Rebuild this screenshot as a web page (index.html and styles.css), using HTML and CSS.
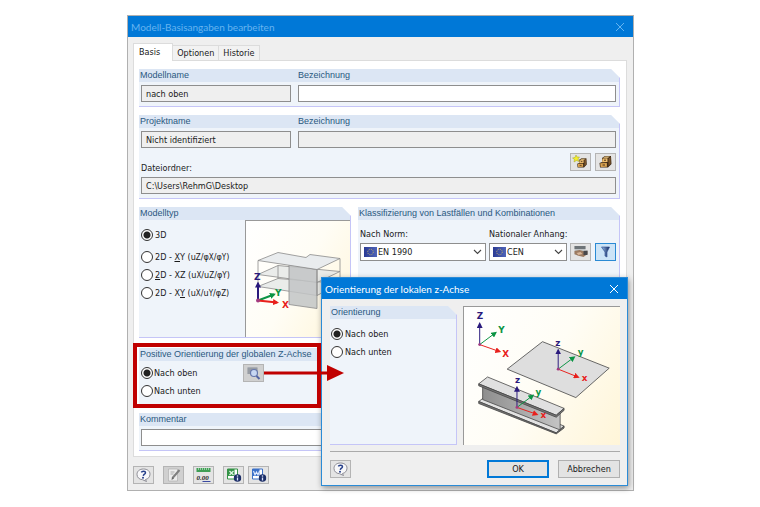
FILE: index.html
```html
<!DOCTYPE html>
<html lang="de">
<head>
<meta charset="utf-8">
<title>Modell-Basisangaben bearbeiten</title>
<link rel="stylesheet" href="styles.css">
</head>
<body>
<svg class="defs" aria-hidden="true">
  <defs>
    <marker id="head-z" viewBox="0 0 6 6" refX="4" refY="3" markerWidth="6" markerHeight="6" markerUnits="userSpaceOnUse" orient="auto"><path d="M0 0L6 3L0 6Z" fill="#2a1a7c"/></marker>
    <marker id="head-y" viewBox="0 0 6 6" refX="4" refY="3" markerWidth="6" markerHeight="6" markerUnits="userSpaceOnUse" orient="auto"><path d="M0 0L6 3L0 6Z" fill="#0b9444"/></marker>
    <marker id="head-x" viewBox="0 0 6 6" refX="4" refY="3" markerWidth="6" markerHeight="6" markerUnits="userSpaceOnUse" orient="auto"><path d="M0 0L6 3L0 6Z" fill="#e8201c"/></marker>
    <linearGradient id="flag-blue"><stop offset="0" stop-color="#2a3a94"/><stop offset="1" stop-color="#5065b8"/></linearGradient>
    <linearGradient id="web" x1="0" x2="1"><stop offset="0" stop-color="#8e8e8e"/><stop offset="1" stop-color="#c4c4c4"/></linearGradient>
    <linearGradient id="funnel"><stop offset="0" stop-color="#9cc4ee"/><stop offset="1" stop-color="#10245c"/></linearGradient>
    <symbol id="flag" viewBox="0 0 13 10"><rect width="13" height="10" fill="url(#flag-blue)"/><circle cx="6.500" cy="5" r="2.800" fill="none" stroke="#c5b66a" stroke-width="1" stroke-dasharray="1 1.200"/></symbol>
    <symbol id="chevron" viewBox="0 0 9 6"><path d="M1 1L4.500 4.500L8 1" fill="none" stroke="#444" stroke-width="1.100"/></symbol>
    <symbol id="help" viewBox="0 0 16 14"><path d="M8 1C12 1 14.500 3.200 14.500 6.200C14.500 9 12.500 11 10 11.500L11 13.500L7 11.700C3.500 11.500 1.500 9.200 1.500 6.400C1.500 3.200 4 1 8 1Z" fill="#f8f8fa" stroke="#8c8c94"/><path d="M5.800 4.400C6.500 2.800 10 2.700 10 4.700C10 6.200 8 6.200 7.800 7.800" fill="none" stroke="#27408b" stroke-width="1.500"/><circle cx="7.500" cy="9.800" r="1" fill="#27408b"/></symbol>
    <symbol id="cabinet" viewBox="0 0 15 14"><path d="M4 3L7 1L13 1L13.500 9L10 12.500H2L1.500 8L4 7Z" fill="#3e2a16"/><path d="M4.500 3.500L9.500 3.200L9.500 7L4 7.200Z" fill="#edbd6d"/><path d="M2.200 8.200L8.800 8L9 11.800L2.700 12Z" fill="#dca552"/><path d="M5 2.800L7.300 1.600H12L10 2.800Z" fill="#f2cf8c"/><path d="M10.500 3.500L12.600 2V8.500L10.500 11Z" fill="#7b552b"/><path d="M6 5.200H8M4.500 10H7" stroke="#4a3119"/></symbol>
    <symbol id="info" viewBox="0 0 8 8"><circle cx="4" cy="4" r="3.800" fill="#1d2f68"/><path d="M4 3.500V6.500" stroke="#dbe4ff" stroke-width="1.300"/><circle cx="4" cy="2" r=".8" fill="#dbe4ff"/></symbol>
  </defs>
</svg>

<main class="desktop">
  <form class="window main-window">
    <header class="titlebar inactive">
      <h1>Modell-Basisangaben bearbeiten</h1>
      <button type="button" class="close" aria-label="Schließen"><svg viewBox="0 0 10 10"><path d="M1 1L9 9M9 1L1 9"/></svg></button>
    </header>
    <nav class="tabs">
      <button type="button" class="tab active">Basis</button>
      <button type="button" class="tab">Optionen</button>
      <button type="button" class="tab">Historie</button>
    </nav>
    <div class="page">
      <section class="group">
        <div class="heading pair"><label for="model">Modellname</label><label for="model-desc">Bezeichnung</label></div>
        <div class="fields pair">
          <input id="model" class="box" value="nach oben" readonly>
          <input id="model-desc" class="box">
        </div>
      </section>

      <section class="group">
        <div class="heading pair"><label for="project">Projektname</label><label for="project-desc">Bezeichnung</label></div>
        <div class="fields pair">
          <input id="project" class="box" value="Nicht identifiziert" readonly>
          <input id="project-desc" class="box" readonly>
        </div>
        <div class="folder-row">
          <label for="folder">Dateiordner:</label>
          <button type="button" class="tool" aria-label="Neues Projekt"><svg viewBox="0 0 17 14"><svg x="4" y="2" width="12" height="12"><use href="#cabinet"/></svg><path d="M4 0L5 2L7.500 2L6 4L7 6.500L4.500 5.500L2 7L2.500 4.500L.5 3L3 2.500Z" fill="#f4ee2c" stroke="#a0a32a" stroke-width=".5"/></svg></button>
          <button type="button" class="tool" aria-label="Projekt wählen"><svg viewBox="0 0 15 14"><use href="#cabinet"/></svg></button>
        </div>
        <div class="fields last">
          <input id="folder" class="box" value="C:\Users\RehmG\Desktop" readonly>
        </div>
      </section>

      <div class="columns">
        <section class="group">
          <h2 class="heading">Modelltyp</h2>
          <div class="model-body">
            <div class="model-types">
              <label class="radio first"><input type="radio" name="type" checked>3D</label>
              <label class="radio"><input type="radio" name="type"><span>2D - <u>X</u>Y (u<small>Z</small>/φ<small>X</small>/φ<small>Y</small>)</span></label>
              <label class="radio"><input type="radio" name="type"><span><u>2</u>D - XZ (u<small>X</small>/u<small>Z</small>/φ<small>Y</small>)</span></label>
              <label class="radio"><input type="radio" name="type"><span>2D - X<u>Y</u> (u<small>X</small>/u<small>Y</small>/φ<small>Z</small>)</span></label>
            </div>
            <div class="picture">
              <svg viewBox="0 0 104 115" role="img" aria-label="Gebäude im Koordinatensystem">
                <g stroke="#8a8a8a" stroke-width=".8" fill="#e3e5e5" fill-opacity=".75">
                  <path d="M12 65L32 57L94 62L71 74Z"/>
                  <path d="M12 53L32 44L94 50L71 61Z"/>
                  <path d="M43 43L71 48V87L43 83Z" fill="#c2c4c6" fill-opacity=".85"/>
                  <path d="M12 39L32 31L60 36L64 33L94 37L71 48Z" fill="#e9ecee" fill-opacity="1"/>
                  <path d="M12 39V79M32 44V57M94 37V62M71 48V74" fill="none"/>
                </g>
                <g class="axes bold">
                  <path class="z" d="M12 79V62"/><path class="y" d="M12 79L28 73"/><path class="x" d="M12 79L31 81"/>
                  <circle cx="12" cy="79" r="2"/>
                  <text class="zt" x="8" y="58">Z</text><text class="yt" x="29" y="74">Y</text><text class="xt" x="36" y="86">X</text>
                </g>
              </svg>
            </div>
          </div>
        </section>

        <section class="group norm">
          <h2 class="heading">Klassifizierung von Lastfällen und Kombinationen</h2>
          <div class="norm-body">
            <div class="norm-field wide">
              <label for="norm">Nach Norm:</label>
              <div class="combo"><svg class="flag"><use href="#flag"/></svg><select id="norm"><option>EN 1990</option></select><svg class="chevron"><use href="#chevron"/></svg></div>
            </div>
            <div class="norm-field">
              <label for="annex">Nationaler Anhang:</label>
              <div class="combo"><svg class="flag"><use href="#flag"/></svg><select id="annex"><option>CEN</option></select><svg class="chevron"><use href="#chevron"/></svg></div>
            </div>
            <button type="button" class="tool" aria-label="Norm bearbeiten"><svg viewBox="0 0 16 14"><path d="M2 1H13V10H2Z" fill="#bfc3c5"/><path d="M2 1H13V4H2Z" fill="#6e7478"/><path d="M2 6L7 5L12 6.500L15 6V9L11 12L5 10.500L2 9Z" fill="#9b7a60"/><path d="M11 6L15 5.500V10L11 10Z" fill="#46474b"/><path d="M4 8L8 7L10 9L6 10Z" fill="#d9b698"/></svg></button>
            <button type="button" class="tool filter" aria-label="Filter"><svg viewBox="0 0 16 14"><path d="M4 2H12L9.500 7V12L7.500 11V7Z" fill="url(#funnel)" stroke="#27458c" stroke-width=".6"/></svg></button>
          </div>
        </section>

        <section class="group orientation">
          <h2 class="heading">Positive Orientierung der globalen Z-Achse</h2>
          <div class="orientation-body">
            <div class="radios">
              <label class="radio"><input type="radio" name="global" checked>Nach oben</label>
              <label class="radio"><input type="radio" name="global">Nach unten</label>
            </div>
            <button type="button" class="tool dark" aria-label="Details"><svg viewBox="0 0 16 14"><path d="M2 1H12V8H2Z" fill="#a9adb4"/><path d="M2 3H12M2 5H12M2 7H9" stroke="#858a92"/><circle cx="8.500" cy="7" r="3.500" fill="#c7d7f3" stroke="#6778ac" stroke-width="1.200"/><path d="M11 10L14 13" stroke="#5264a4" stroke-width="2"/></svg></button>
          </div>
        </section>
      </div>

      <section class="group">
        <label class="heading" for="comment">Kommentar</label>
        <div class="fields"><input id="comment" class="box"></div>
      </section>
    </div>
    <footer class="toolbar">
      <button type="button" class="tool" aria-label="Hilfe"><svg viewBox="0 0 16 14"><use href="#help"/></svg></button>
      <button type="button" class="tool dark" aria-label="Kommentar"><svg viewBox="0 0 16 14"><path d="M3 1H12V13H3Z" fill="#ececec" stroke="#aaa" stroke-width=".6"/><path d="M5 4H9M5 6H8" stroke="#aaa"/><path d="M7 10L14 2" stroke="#808080" stroke-width="2"/><path d="M6 12L6.500 9L8.500 10.500Z" fill="#666"/></svg></button>
      <button type="button" class="tool" aria-label="Einheiten"><svg viewBox="0 0 16 14"><path d="M1 0H15V4H1Z" fill="#3f9e55"/><path d="M3 0V2M5 0V2M7 0V2M9 0V2M11 0V2M13 0V2" stroke="#bfe3c5" stroke-width=".7"/><text class="digits" x="1" y="12">0.00</text><path d="M7 13.500H15" stroke="#3a49a0"/></svg></button>
      <button type="button" class="tool" aria-label="Excel-Info"><svg viewBox="0 0 16 14"><path d="M2 1H12V11H2Z" fill="#fff" stroke="#349347"/><path d="M2 1H9V8H2Z" fill="#349347"/><path d="M4 3L8 7M8 3L4 7" stroke="#dff5e2" stroke-width="1.300"/><svg x="8" y="6" width="8" height="8"><use href="#info"/></svg></svg></button>
      <button type="button" class="tool" aria-label="Word-Info"><svg viewBox="0 0 16 14"><path d="M2 1H12V11H2Z" fill="#fff" stroke="#3b70c8"/><path d="M2 1H9V8H2Z" fill="#3b70c8"/><path d="M3 3L4.500 7L6 4L7.500 7L9 3" fill="none" stroke="#e3ecff" stroke-width="1.100"/><svg x="8" y="6" width="8" height="8"><use href="#info"/></svg></svg></button>
    </footer>
  </form>

  <form class="window dialog">
    <header class="titlebar">
      <h1>Orientierung der lokalen z-Achse</h1>
      <button type="button" class="close" aria-label="Schließen"><svg viewBox="0 0 10 10"><path d="M1 1L9 9M9 1L1 9"/></svg></button>
    </header>
    <div class="dialog-body">
      <section class="group">
        <h2 class="heading">Orientierung</h2>
        <div class="radios">
          <label class="radio"><input type="radio" name="local" checked>Nach oben</label>
          <label class="radio"><input type="radio" name="local">Nach unten</label>
        </div>
      </section>
      <div class="picture">
        <svg viewBox="0 0 159 138" role="img" aria-label="Lokale Achsen an Fläche und Stab">
          <path d="M80 34L148 61L114 91L44 62Z" fill="#dedede" stroke="#555" stroke-width=".9"/>
          <g stroke="#444" stroke-width=".8" stroke-linejoin="round">
            <path d="M15 95L23 89L102 120L94 127Z" fill="#e2e2e2"/>
            <path d="M15 95V97L94 128L102 122V120L94 127Z" fill="#777"/>
            <path d="M19 79V93L98 124V106Z" fill="url(#web)"/>
            <path d="M15 77L24 70L102 102L94 109Z" fill="#e0e0e0"/>
            <path d="M15 77V79L94 111L102 104V102L94 109Z" fill="#777"/>
          </g>
          <g class="axes">
            <path class="z" d="M16 37V16"/><path class="y" d="M16 37L32 25"/><path class="x" d="M16 37L36 44"/><circle cx="16" cy="37" r="1.500"/>
            <text class="zt" x="13" y="11">Z</text><text class="yt" x="35" y="25">Y</text><text class="xt" x="39" y="50">X</text>
            <path class="z" d="M96 62V43"/><path class="y" d="M96 62L112 50"/><path class="x" d="M96 62L116 70"/><circle cx="96" cy="62" r="1.500"/>
            <text class="zt" x="93" y="38">z</text><text class="yt" x="116" y="48">y</text><text class="xt" x="120" y="74">x</text>
            <path class="z" d="M54 101V81"/><path class="y" d="M54 101L70 89"/><path class="x" d="M54 101L74 108"/><circle cx="54" cy="101" r="1.500"/>
            <text class="zt" x="52" y="76">z</text><text class="yt" x="73" y="88">y</text><text class="xt" x="78" y="112">x</text>
          </g>
        </svg>
      </div>
    </div>
    <footer class="dialog-footer">
      <button type="button" class="tool" aria-label="Hilfe"><svg viewBox="0 0 16 14"><use href="#help"/></svg></button>
      <button type="submit" class="action primary">OK</button>
      <button type="button" class="action">Abbrechen</button>
    </footer>
  </form>

  <div class="callout"></div>
  <svg class="callout-arrow" viewBox="0 0 80 18" aria-hidden="true"><path d="M0 9H66" stroke="#c00000" stroke-width="3"/><path d="M63 1L80 9L63 17Z" fill="#c00000"/></svg>
</main>
</body>
</html>
```

FILE: styles.css
```css
* { box-sizing: border-box; }

body {
  margin: 0;
  background: #fff;
  color: #1a1a1a;
  font: 9px/12px "DejaVu Sans Condensed", "Noto Sans", sans-serif;
}

h1, h2 { margin: 0; font: inherit; }
button, input, select { font: inherit; color: inherit; margin: 0; }
.defs { position: absolute; width: 0; height: 0; }

.desktop { position: relative; padding: 15px 126px 16px 127px; }

.window { background: #efefef; border: 1px solid #b0b0b0; }

.titlebar {
  display: flex;
  align-items: center;
  justify-content: space-between;
  height: 21px;
  padding: 0 8px 0 3px;
  background: #0078d7;
  color: #fff;
  font: 10px/12px Lato, "Noto Sans", sans-serif;
}
.inactive { color: #66b4f0; }
.close { display: flex; padding: 0; border: 0; background: none; }
.close svg { width: 10px; height: 10px; fill: none; stroke: currentColor; }

.tabs { display: flex; align-items: flex-end; padding: 6px 5px 0; }
.tab {
  height: 15px;
  padding: 0 4px;
  border: 1px solid #dcdcdc;
  border-width: 1px 1px 0 0;
  background: #f2f2f2;
}
.tab.active {
  height: 18px;
  margin-bottom: -1px;
  padding: 0 12px 2px 5px;
  border-left-width: 1px;
  background: #fff;
  z-index: 1;
}

.page {
  display: flex;
  flex-direction: column;
  gap: 8px;
  margin: 0 6px 0 5px;
  padding: 8px 6px 5px 5px;
  background: #fff;
  border: 1px solid #dcdcdc;
}

.group {
  background: #eff4fa;
  border: solid #c5c5f7;
  border-width: 0 1px 1px 0;
  clip-path: polygon(0 0, calc(100% - 9px) 0, 100% 9px, 100% 100%, 0 100%);
}
.heading {
  display: block;
  height: 13px;
  padding: 0 1px;
  background: #dce6f4;
  color: #2a587f;
  font: 9px/13px "Liberation Sans", sans-serif;
}
.pair { display: grid; grid-template-columns: 150px 1fr; column-gap: 7px; }
.fields { padding: 3px 3px 4px 2px; }
.fields.last { padding-top: 6px; }

.box {
  width: 100%;
  min-width: 0;
  height: 17px;
  padding: 0 4px;
  border: 1px solid #8e8e8e;
  border-radius: 0;
  background: #fff;
  outline: 0;
}
.box:read-only { background: #efefef; }
.pair.heading { column-gap: 8px; }

.folder-row { display: flex; align-items: flex-end; gap: 4px; padding: 1px 3px 0 2px; }
.folder-row label { flex: 1; line-height: 6px; }

.tool {
  display: flex;
  align-items: center;
  justify-content: center;
  flex: none;
  width: 21px;
  height: 18px;
  padding: 0;
  border: 1px solid #b4b4b4;
  background: #e4e4e4;
}
.tool > svg { display: block; width: 17px; height: 14px; }
.tool.dark { background: #d0d0d0; }
.tool.filter { border-color: #2a8ad4; background: #cce4f7; }
.digits { font: bold italic 7px "Liberation Serif", serif; fill: #222; }

.columns { display: grid; grid-template-columns: 212fr 262fr; gap: 10px 7px; }
.norm { grid-row: span 2; }

.radio { display: flex; align-items: center; gap: 1px; height: 18px; }
.radio input {
  appearance: none;
  flex: none;
  width: 12px;
  height: 12px;
  border: 1px solid #333;
  border-radius: 50%;
  background: #fff;
}
.radio input:checked { background: radial-gradient(circle, #222 0 3px, #fff 4px); }
.radio small { font-size: 8px; }

.model-body { display: grid; grid-template-columns: 106px 1fr; height: 117px; }
.model-types { padding: 6px 0 0 2px; white-space: nowrap; }
.model-types .radio { gap: 2px; }
.model-types .first { margin-bottom: 4px; }

.picture {
  border: solid #999;
  border-width: 1px 0 0 1px;
  background: linear-gradient(120deg, #fff, #fffdf5 50%, #fff5d8);
}
.picture svg { display: block; width: 100%; height: 100%; }

.axes path { fill: none; stroke-width: 1; }
.axes.bold path { stroke-width: 2; }
.axes .z { stroke: #2a1a7c; marker-end: url(#head-z); }
.axes .y { stroke: #0b9444; marker-end: url(#head-y); }
.axes .x { stroke: #e8201c; marker-end: url(#head-x); }
.axes circle { fill: #a33a80; }
.axes text { font: bold 9px "DejaVu Sans", sans-serif; }
.axes .zt { fill: #2a1a7c; }
.axes .yt { fill: #0b9444; }
.axes .xt { fill: #e8201c; }

.norm-body { display: flex; align-items: flex-end; gap: 3px; padding: 8px 3px 0 2px; }
.norm-field { flex: 78; min-width: 0; white-space: nowrap; }
.norm-field.wide { flex: 126; }
.norm-field label { display: block; margin-bottom: 3px; }
.norm-body .filter { margin-left: 1px; }
.combo {
  display: flex;
  align-items: center;
  height: 18px;
  padding: 0 3px;
  border: 1px solid #8e8e8e;
  background: #fff;
}
.combo select { flex: 1; min-width: 0; padding: 0 1px; border: 0; background: none; appearance: none; }
.flag { flex: none; width: 13px; height: 10px; }
.chevron { flex: none; width: 9px; height: 6px; }

.orientation-body { display: flex; align-items: flex-start; gap: 40px; padding: 3px 2px 4px; }
.orientation-body .radios { width: 62px; white-space: nowrap; }

.toolbar { display: flex; gap: 9px; padding: 9px 5px 6px; }
.toolbar .tool:last-child { margin-left: -5px; }

.dialog {
  position: absolute;
  left: 321px;
  top: 277px;
  width: 307px;
  border-color: #2b8bd6;
  box-shadow: 1px 2px 6px rgba(0, 0, 0, .4);
}
.dialog-body { display: grid; grid-template-columns: 127px 1fr; gap: 6px; height: 152px; padding: 7px 7px 6px 8px; }
.dialog-body .radios { padding: 6px 1px; }
.dialog-body .radio { gap: 2px; }
.dialog-footer {
  display: flex;
  gap: 9px;
  margin: 0 7px 0 8px;
  padding: 8px 0 7px;
  border-top: 1px solid #aaa;
}
.dialog-footer .tool { margin-right: auto; }
.action { width: 62px; height: 18px; padding: 0; border: 1px solid #b0b0b0; background: #e3e3e3; }
.action.primary { border: 2px solid #0078d7; }

.callout {
  position: absolute;
  left: 133px;
  top: 343px;
  width: 188px;
  height: 65px;
  border: 4px solid #c00000;
}
.callout-arrow { position: absolute; left: 264px; top: 364px; width: 80px; height: 18px; }
```
